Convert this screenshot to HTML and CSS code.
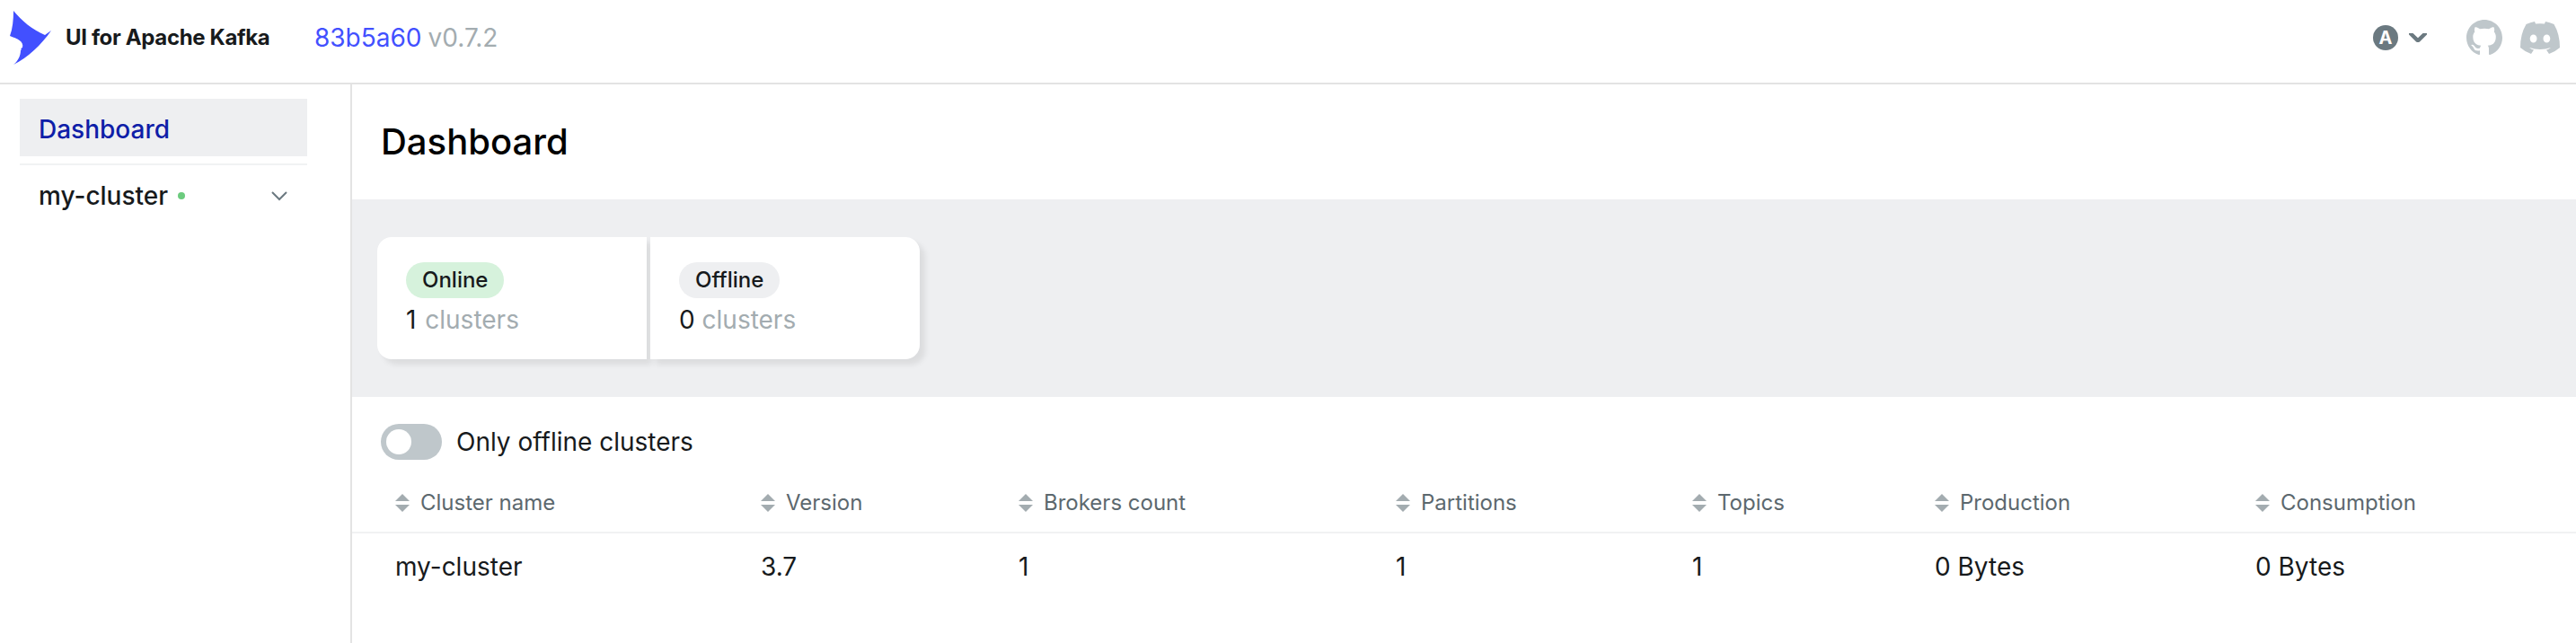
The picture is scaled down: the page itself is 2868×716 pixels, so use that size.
FILE: index.html
```html
<!DOCTYPE html>
<html lang="en">
<head>
<meta charset="utf-8">
<title>UI for Apache Kafka</title>
<link rel="stylesheet" href="styles.css">
</head>
<body>
<svg class="defs" width="0" height="0" aria-hidden="true">
  <symbol id="sort" viewBox="0 0 16 20"><path d="M8 0l8 8H0zM8 20L0 12h16z"/></symbol>
</svg>
<header class="navbar">
  <svg class="logo" viewBox="0 0 46 60"><path d="M4 0C13 11 25 21 39 27L46 22C35 38 20 52 4 60C9 56 12 50 12 44L13 43C12 42 12 42 14 41C16 34 8 31 0 28C3 20 4 10 4 0Z"/></svg>
  <span class="brand">UI for Apache Kafka</span>
  <div class="version"><a class="commit">83b5a60</a><span>v0.7.2</span></div>
  <div class="tools">
    <div class="theme">
      <span class="auto">A</span>
      <svg class="chev" viewBox="0 0 20 10"><path d="M0 0H4.500L10 5.200L15.500 0H20V1.500L12 9.500Q10 10.500 8 9.500L0 1.500Z"/></svg>
    </div>
    <svg class="github" viewBox="0 0 16 16"><path d="M8 0C3.58 0 0 3.58 0 8c0 3.54 2.29 6.53 5.47 7.59.4.07.55-.17.55-.38 0-.19-.01-.82-.01-1.49-2.01.37-2.53-.49-2.69-.94-.09-.23-.48-.94-.82-1.13-.28-.15-.68-.52-.01-.53.63-.01 1.08.58 1.23.82.72 1.21 1.87.87 2.33.66.07-.52.28-.87.51-1.07-1.78-.2-3.64-.89-3.64-3.95 0-.87.31-1.59.82-2.15-.08-.2-.36-1.02.08-2.12 0 0 .67-.21 2.2.82.64-.18 1.32-.27 2-.27s1.36.09 2 .27c1.53-1.04 2.2-.82 2.2-.82.44 1.1.16 1.92.08 2.12.51.56.82 1.27.82 2.15 0 3.07-1.87 3.75-3.65 3.95.29.25.54.73.54 1.48 0 1.07-.01 1.93-.01 2.2 0 .21.15.46.55.38A8.01 8.01 0 0 0 16 8c0-4.42-3.58-8-8-8z"/></svg>
    <svg class="discord" viewBox="0 0 44 36" ><path fill-rule="evenodd" d="M16 0L17 2.500Q22 1.800 27 2.500L28 0Q33 .8 37.500 3Q44 14 44 29Q39 33.500 32 36L29 31.500Q31.500 31 34 29Q22 33 10 29Q12.500 31 15 31.500L12 36Q5 33.500 0 29Q0 14 6.500 3Q11 .8 16 0ZM14.600 14.500a3.900 4.500 0 1 0 0 9a3.900 4.500 0 1 0 0-9ZM29.400 14.500a3.900 4.500 0 1 0 0 9a3.900 4.500 0 1 0 0-9Z"/></svg>
  </div>
</header>
<div class="body">
  <nav class="sidebar">
    <a class="item active">Dashboard</a>
    <hr class="rule">
    <div class="item"><span>my-cluster</span><i class="dot"></i><svg class="caret" viewBox="0 0 18 10"><path d="M1 1l8 8 8-8"/></svg></div>
  </nav>
  <main class="main">
    <h1 class="title">Dashboard</h1>
    <section class="metrics">
      <div class="cards">
        <div class="card"><span class="tag online">Online</span><div class="count one">1 <span>clusters</span></div></div>
        <div class="card"><span class="tag">Offline</span><div class="count">0 <span>clusters</span></div></div>
      </div>
    </section>
    <label class="filter"><span class="switch"></span>Only offline clusters</label>
    <table class="table">
      <colgroup><col class="c1"><col class="c2"><col class="c3"><col class="c4"><col class="c5"><col class="c6"><col></colgroup>
      <thead><tr>
        <th><svg class="sort"><use href="#sort"/></svg>Cluster name</th>
        <th><svg class="sort"><use href="#sort"/></svg>Version</th>
        <th><svg class="sort"><use href="#sort"/></svg>Brokers count</th>
        <th><svg class="sort"><use href="#sort"/></svg>Partitions</th>
        <th><svg class="sort"><use href="#sort"/></svg>Topics</th>
        <th><svg class="sort"><use href="#sort"/></svg>Production</th>
        <th><svg class="sort"><use href="#sort"/></svg>Consumption</th>
      </tr></thead>
      <tbody><tr><td>my-cluster</td><td>3.7</td><td>1</td><td>1</td><td>1</td><td>0 Bytes</td><td>0 Bytes</td></tr></tbody>
    </table>
  </main>
</div>
</body>
</html>
```
FILE: styles.css
```css
* { box-sizing: border-box; }
body { margin: 0; height: 716px; overflow: hidden; display: flex; flex-direction: column; background: #fff; color: #171a1c; font: 400 28px/40px Inter, sans-serif; }
.defs { position: absolute; }
.navbar { height: 94px; flex: none; display: flex; align-items: center; border-bottom: 2px solid #e3e3e3; padding: 0 18px 8px 11px; }
.logo { width: 46px; height: 60px; fill: #4250ff; }
.brand { width: 229px; margin-left: 16px; font-size: 24px; font-weight: 700; letter-spacing: -0.35px; white-space: nowrap; }
.version { margin-left: 48px; display: flex; gap: 7px; color: #a3acb0; }
.commit { color: #4250ff; }
.tools { margin-left: auto; display: flex; align-items: center; }
.theme { display: flex; align-items: center; gap: 12px; margin-right: 44px; }
.auto { width: 28px; height: 28px; border-radius: 50%; background: #6b7980; color: #fff; font: 700 20px/28px Inter, sans-serif; text-align: center; }
.chev { width: 20px; height: 10px; fill: #6b7980; }
.github { width: 40px; height: 40px; fill: #bfc7cb; margin-right: 20px; }
.discord { width: 44px; height: 36px; fill: #bfc7cb; }
.body { flex: 1; display: flex; min-height: 0; }
.sidebar { width: 392px; flex: none; border-right: 2px solid #e3e3e3; padding: 16px 48px 0 22px; }
.item { height: 64px; padding: 4px 22px 0 21px; display: flex; align-items: center; font-weight: 500; }
.active { background: #eeeff1; color: #0f1ea8; }
.rule { border: 0; height: 2px; margin: 8px 0 0; background: #f1f2f3; }
.dot { width: 8px; height: 8px; border-radius: 50%; background: #6ccb7e; margin-left: 11px; }
.caret { width: 18px; height: 10px; margin-left: auto; fill: none; stroke: #6b7980; stroke-width: 2; overflow: visible; }
.main { flex: 1; min-width: 0; }
.title { margin: 0; height: 128px; padding: 0 32px; font-size: 40px; line-height: 128px; font-weight: 500; color: #000; }
.metrics { height: 220px; padding: 42px 28px; background: #eeeff1; }
.cards { display: flex; gap: 4px; }
.card { width: 300px; height: 136px; background: #fff; padding: 28px 32px; box-shadow: 6px 6px 6px rgba(0,0,0,.08); }
.card:first-child { border-radius: 16px 0 0 16px; }
.card:last-child { border-radius: 0 16px 16px 0; }
.tag { display: block; width: fit-content; height: 40px; padding: 0 18px; border-radius: 20px; background: #eeeff1; font-size: 24px; font-weight: 500; }
.online { background: #d6f2dc; }
.count { margin-top: 4px; }
.count span { color: #a3acb0; }
.one { word-spacing: 2px; }
.filter { display: flex; align-items: center; gap: 16px; margin: 30px 32px 0; height: 40px; }
.switch { width: 68px; height: 40px; border-radius: 20px; background: #bfc7cb; padding: 6px; }
.switch::before { content: ""; display: block; width: 28px; height: 28px; border-radius: 50%; background: #fff; }
.table { width: 100%; margin-top: 16px; border-spacing: 0; table-layout: fixed; }
.c1 { width: 407px; } .c2 { width: 287px; } .c3 { width: 420px; } .c4 { width: 330px; } .c5 { width: 270px; } .c6 { width: 357px; }
th { height: 66px; padding: 0 0 0 48px; text-align: left; font-size: 24px; font-weight: 400; color: #5c686e; border-bottom: 2px solid #f1f2f3; }
td { height: 73px; padding: 0 0 0 48px; }
.sort { width: 16px; height: 20px; margin-right: 12px; fill: #a3acb0; vertical-align: -2px; }
```
